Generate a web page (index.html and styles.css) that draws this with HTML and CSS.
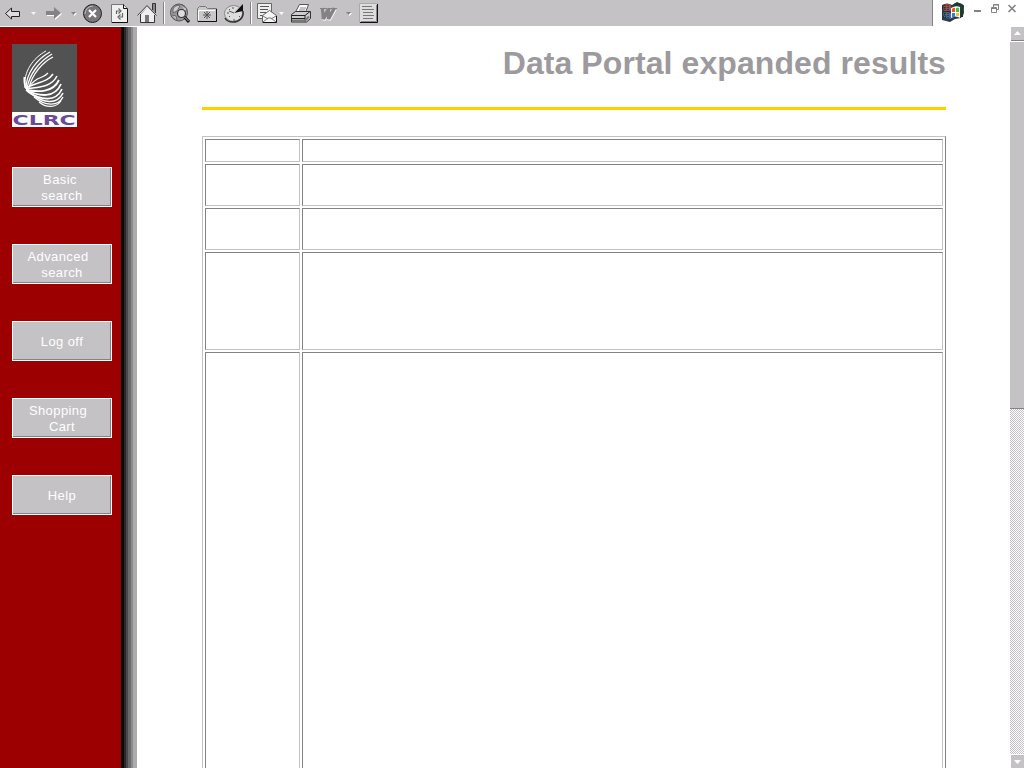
FILE: index.html
```html
<!DOCTYPE html>
<html lang="en">
<head>
<meta charset="utf-8">
<title>Data Portal expanded results</title>
<link rel="stylesheet" href="styles.css">
</head>
<body>
<header class="topbar">
  <div class="toolbar">
    <svg width="400" height="26" viewBox="0 0 400 26">
      <!-- back -->
      <path d="M5.500 13.500 11.500 8V11.500H19.500V16.500H11.500V19Z" fill="#ddd" stroke="#222"/>
      <path d="M31 12h5l-2.500 3z" fill="#f4f4f4"/>
      <!-- forward -->
      <path d="M47 12h8V8l7 6-7 6v-4h-8z" fill="#fff"/>
      <path d="M46 11h8V7l7 6-7 6v-4h-8z" fill="#848284"/>
      <path d="M72 13h5l-2.500 3z" fill="#fff"/><path d="M71 12h5l-2.500 3z" fill="#848284"/>
      <!-- stop -->
      <circle cx="92.500" cy="13.500" r="9" fill="#777" stroke="#222"/>
      <path d="M85 14a8 8 0 0 1 8-8" fill="none" stroke="#bbb"/>
      <path d="m89 10 7 7m0-7-7 7" stroke="#fff" stroke-width="2.200"/>
      <!-- refresh -->
      <path d="M111.500 4.500h12l4 4v14h-16z" fill="#f0f0f0" stroke="#777"/>
      <path d="M112 22.500h15.500V9M123.500 4.500v4h4" fill="none" stroke="#111"/>
      <path d="M116.500 14v-3h3M118.500 8.500l2.500 2.500-2.500 2.500M122.500 13v4h-3M120.500 14.500 118 17l2.500 2.500" fill="none" stroke="#666" stroke-width="1.200"/>
      <!-- home -->
      <path d="M152.500 10V3.500h3V13" fill="#888" stroke="#333"/>
      <path d="M140.500 14v8.500h14V14L147 7z" fill="#eee" stroke="#333"/>
      <path d="m137.500 15.500 9.500-10 9.500 10" fill="none" stroke="#444"/>
      <path d="m138.500 15.500 8.500-8.500 8.500 8.500" fill="none" stroke="#ddd"/>
      <path d="M145 15h4v7h-4z" fill="#777"/>
      <path d="M163.500 2v22" stroke="#848284"/><path d="M164.500 2v22" stroke="#fff"/>
      <!-- search -->
      <circle cx="179" cy="12.500" r="8.500" fill="#999" stroke="#555"/>
      <path d="M173 9c2-4 6-4 7-3l-3 5-4 2zM182 5l5 4-2 3M172 15l4 1 1 4" fill="#ccc" stroke="#666"/>
      <circle cx="181.500" cy="13.500" r="4" fill="#ddd" stroke="#333" stroke-width="1.200"/>
      <path d="m184.500 17 4.500 5" stroke="#111" stroke-width="3"/><path d="m184.500 17 4 4" stroke="#bbb"/>
      <!-- favorites -->
      <path d="M197.500 21.500v-13l2-2h6l2 2h9v13z" fill="#c8c8c8" stroke="#777"/>
      <path d="M198 21.500h18.500V9" fill="none" stroke="#111"/><path d="M198.500 20V10.500H215" fill="none" stroke="#fff"/>
      <path d="M207 11v8m-4-4h8m-7-3 6 6m0-6-6 6" stroke="#555"/>
      <!-- history -->
      <ellipse cx="233.500" cy="13.500" rx="9" ry="8" fill="#ddd" stroke="#888"/>
      <path d="M243 11c1 7-4 11-10 11-4 0-7-2-8-4" fill="none" stroke="#333" stroke-width="1.500"/>
      <path d="m234 13 9-9v7z" fill="#111"/><path d="m234 13 8-9" stroke="#bbb"/>
      <path d="M233 7v2m-6 4h2m5 6v2m5-5 1 1m-11-8 1 1m-1 7 1-1m4-3-5-2" stroke="#555"/>
      <path d="M250.500 2v22" stroke="#848284"/><path d="M251.500 2v22" stroke="#fff"/>
      <!-- mail -->
      <path d="M257.500 3.500h14v15h-14z" fill="#eee" stroke="#666"/>
      <path d="M260 6.500h9m-9 3h8m-8 3h6m-6 3h4" stroke="#555"/>
      <path d="m262.500 15.500 7-5 7 5v7h-14z" fill="#f5f5f5" stroke="#666"/>
      <path d="m263 22 5-4h3l5 4m-13-6 5 3m8-3-5 3" fill="none" stroke="#777"/>
      <path d="M263 22.500h13.500V16" fill="none" stroke="#111"/>
      <path d="M279 12h5l-2.500 3z" fill="#fff"/>
      <!-- print -->
      <path d="m295.500 12 4-7.500h9l-3 8z" fill="#fff" stroke="#555"/>
      <path d="m300 8 6 0m-7 2h6" stroke="#888"/>
      <path d="m291.500 14.500 4-3h15v7l-4 3.500h-15z" fill="#ccc" stroke="#333"/>
      <path d="M292 15.500h13v6m0-6 5-4M292 18.500h13" fill="none" stroke="#222"/>
      <path d="M292 20.500h13l4-4" fill="none" stroke="#777" stroke-width="2"/>
      <!-- word -->
      <g fill="none" stroke-linejoin="bevel"><path d="m323 9 1 11 5-10v10l6-11" stroke="#fff" stroke-width="3.500"/>
      <path d="m322.500 8 1 11 5-10v10l6-11" stroke="#848284" stroke-width="3.500"/><path d="M320 8.500h7m1 0h9" stroke="#848284"/></g>
      <path d="M347 13h5l-2.500 3z" fill="#fff"/><path d="M346 12h5l-2.500 3z" fill="#848284"/>
      <!-- discuss -->
      <path d="M359.500 3.500h18v19h-18z" fill="#ddd" stroke="#aaa"/>
      <path d="M360 22.500h17.500V4" fill="none" stroke="#111"/><path d="M361 21.500h15.500V5" fill="none" stroke="#888"/>
      <path d="M362 6.500h10m-10 3h12m-11 3h10m-10 3h11m-11 3h10" stroke="#777"/>
    </svg>
  </div>
  <div class="window-tools">
    <svg width="91" height="26" viewBox="933 0 91 26">
      <!-- flag -->
      <path d="M942 5q5-3 10 0l5-3 6 3 1 8-3 5-6 1-5 3-8-2z" fill="#303848"/>
      <path d="M944 5q4-2 7 0v6q-4-1-8 1z" fill="#985048"/>
      <path d="M943 13q4-2 8 0v6q-4-1-7-1z" fill="#456c98"/>
      <path d="M951 8q5-3 9-1v11q-4-3-9 0z" fill="#fff"/>
      <path d="M952 9q2-2 3-1v4h-3z" fill="#e45828"/><path d="M956 8q2-1 3 0v4h-3z" fill="#4fbd35"/>
      <path d="M952 13h3v4h-3z" fill="#347fd8"/><path d="M956 13h3v3h-3z" fill="#f5c520"/>
      <path d="M954 5q5-3 9 1l-1 11" fill="none" stroke="#193b22" stroke-width="2"/>
      <path d="M942 8h3m-2 3h2m-3 3h3m-2 3h3m2-12v14m-3-14v13" stroke="#181818" stroke-dasharray="1 1"/>
      <!-- window controls -->
      <path d="M974 11h7" stroke="#848284" stroke-width="2"/>
      <g fill="none" stroke="#848284"><path d="M993.500 7V4.500h5v5H997M993 5h6"/><path d="M991.500 7.500h5v5h-5zM991 8.500h6"/></g>
      <path d="m1008.500 5 7 7m0-7-7 7" stroke="#848284" stroke-width="1.600"/>
    </svg>
  </div>
</header>
<div class="body">
  <nav class="sidebar">
    <div class="logo">
      <svg width="65" height="68" viewBox="0 0 65 68" fill="none" stroke="#fff">
        <path d="M34 7C21 14 11 28 13 44" stroke-width="1"/>
        <path d="M38 8C25 15 14 29 14 45" stroke-width="1.200"/>
        <path d="M40 10C28 17 17 30 15 45" stroke-width="1.300"/>
        <path d="M41 13C31 18 20 30 17 44" stroke-width="1.300"/>
        <path d="M36 29C31 35 24 32 18 42" stroke-width="1.200"/>
        <path d="M41 30C35 39 24 38 14 44" stroke-width="1.500"/>
        <path d="M45 32C39 44 25 43 14 45" stroke-width="1.600"/>
        <path d="M47 36C41 49 26 48 14 46" stroke-width="1.800"/>
        <path d="M49 40C43 54 28 53 14 46" stroke-width="1.800"/>
        <path d="M50 45C44 58 29 57 15 47" stroke-width="1.700"/>
        <path d="M51 49C45 61 31 60 17 48" stroke-width="1.600"/>
        <path d="M51 53C46 63 33 62 22 53" stroke-width="1.400"/>
        <path d="M49 57C44 64 34 64 27 58" stroke-width="1.100"/>
        <path d="M12.500 33C12 42 14 46 20 50" stroke-width="2"/>
      </svg>
      <div class="logo-name"><span>CLRC</span></div>
    </div>
    <a class="button"><span class="first">Basic</span><span>search</span></a>
    <a class="button"><span class="first wide">Advanced</span><span>search</span></a>
    <a class="button"><span>Log off</span></a>
    <a class="button"><span class="first wide">Shopping</span><span>Cart</span></a>
    <a class="button"><span>Help</span></a>
  </nav>
  <div class="shadow"></div>
  <main class="content">
    <h1>Data Portal expanded results</h1>
    <div class="results">
      <div class="cell"></div><div class="cell"></div>
      <div class="cell"></div><div class="cell"></div>
      <div class="cell"></div><div class="cell"></div>
      <div class="cell"></div><div class="cell"></div>
      <div class="cell"></div><div class="cell"></div>
    </div>
  </main>
  <div class="scrollbar">
    <div class="scroll-button up"><svg width="13" height="13"><path d="M3 8h7L6.500 4z" fill="#fff"/></svg></div>
    <div class="thumb"></div>
    <div class="track"></div>
    <div class="scroll-button"><svg width="13" height="13"><path d="M3 5h7L6.500 9z" fill="#fff"/></svg></div>
  </div>
</div>
</body>
</html>
```
FILE: styles.css
```css
* { box-sizing: border-box; }
body {
  margin: 0;
  height: 768px;
  overflow: hidden;
  background: #fff;
  font-family: "Liberation Sans", Arial, sans-serif;
}
svg { display: block; }
.topbar { display: flex; height: 27px; }
.toolbar {
  width: 933px;
  height: 26px;
  background: #c5c2c5;
  border-right: 1px solid #848284;
}
.window-tools { width: 91px; }
.body { display: flex; height: 741px; }
.sidebar {
  display: flex;
  flex-direction: column;
  width: 121px;
  padding: 17px 0 0 12px;
  background: #9c0000;
}
.logo { width: 65px; height: 83px; margin-bottom: 40px; background: #525252; }
.logo-name {
  display: flex;
  justify-content: center;
  height: 15px;
  background: #fff;
  color: #6b4a9c;
  font: bold 14px/16px "DejaVu Sans", sans-serif;
}
.logo-name span { transform: scaleX(1.57); }
.button {
  display: flex;
  flex-direction: column;
  align-items: center;
  justify-content: center;
  width: 100px;
  height: 40px;
  margin-bottom: 37px;
  padding-top: 2px;
  border: 1px solid #fff;
  background: #c5c2c5;
  box-shadow: inset -1px -1px #848284;
  color: #fff;
  font-size: 13px;
  line-height: 16px;
  letter-spacing: .4px;
}
.first { padding-right: 4px; }
.wide { padding-right: 8px; }
.shadow {
  width: 16px;
  background: linear-gradient(to right, #080c08 3px, #292829 3px 5px, #4a484a 5px 7px, #6b696b 7px 10px, #8c8a8c 10px 12px, #adaaad 12px);
}
.content { width: 873px; padding: 16px 64px 0 65px; overflow: hidden; }
h1 {
  height: 67px;
  margin: 0 0 26px;
  border-bottom: 3px solid #ffcf00;
  color: #9c9a9c;
  font-size: 32px;
  line-height: 40px;
  letter-spacing: .08px;
  text-align: right;
  white-space: nowrap;
}
.results {
  display: grid;
  grid-template-columns: 95px 641px;
  grid-template-rows: 23px 42px 42px 98px 440px;
  gap: 2px;
  width: 744px;
  padding: 2px;
  border: 1px solid;
  border-color: #c5c2c5 #848284 #848284 #c5c2c5;
}
.cell {
  border: 1px solid;
  border-color: #848284 #c5c2c5 #c5c2c5 #848284;
}
.scrollbar {
  display: flex;
  flex-direction: column;
  width: 14px;
  background: #fff;
}
.scroll-button { height: 13px; margin-left: 1px; background: #c5c2c5; }
.up { height: 14px; border-bottom: 1px solid #848284; }
.thumb {
  height: 367px;
  margin-top: 1px;
  background: #c5c2c5;
  border-bottom: 1px solid #848284;
}
.track {
  flex: 1;
  margin-bottom: 1px;
  background: repeating-conic-gradient(#c5c2c5 0 25%, #fff 0 50%) 0 0 / 2px 2px;
}
```
